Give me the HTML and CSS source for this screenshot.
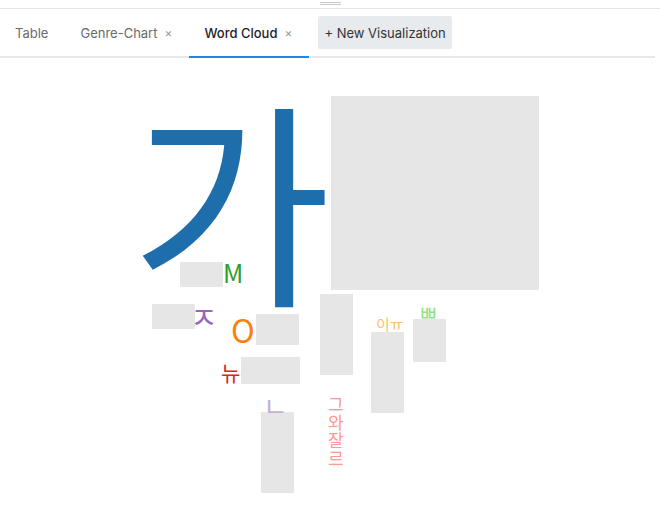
FILE: index.html
```html
<!DOCTYPE html>
<html lang="ko">
<head>
<meta charset="utf-8">
<title>Word Cloud</title>
<link rel="stylesheet" href="styles.css">
</head>
<body>
<div class="app">
  <div class="grip-row"><span class="grip"></span></div>
  <div class="tabbar">
    <div class="tab">Table</div>
    <div class="tab">Genre-Chart<span class="close">×</span></div>
    <div class="tab active">Word Cloud<span class="close">×</span></div>
    <button class="new-vis">+ New Visualization</button>
  </div>
  <svg class="cloud" width="660" height="463" viewBox="0 0 660 463">
    <g transform="translate(0,-58)">
      <rect class="blank" x="331" y="96" width="208" height="194"/>
      <rect class="blank" x="180" y="262" width="43" height="25"/>
      <rect class="blank" x="152" y="304" width="43" height="25"/>
      <rect class="blank" x="256" y="314" width="43" height="31"/>
      <rect class="blank" x="241" y="357" width="59" height="27"/>
      <rect class="blank" x="261" y="412" width="33" height="81"/>
      <rect class="blank" x="320" y="294" width="33" height="81"/>
      <rect class="blank" x="371" y="332" width="33" height="81"/>
      <rect class="blank" x="413" y="319" width="33" height="43"/>

      <text class="w w-blue" x="231" y="290" font-size="218" text-anchor="middle">가</text>
      <text class="w w-green" x="223" y="283" font-size="25">M</text>
      <text class="w w-orange" x="231" y="343" font-size="32">O</text>
      <text class="w w-purple" x="190" y="328" font-size="30">ㅈ</text>
      <text class="w w-red" x="221" y="381" font-size="21">뉴</text>
      <text class="w w-lavender" x="263" y="417" font-size="27">ㄴ</text>
      <text class="w w-peach" x="376" y="330" font-size="15">이ㅠ</text>
      <text class="w w-lightgreen" x="418" y="321" font-size="22">ㅃ</text>
      <text class="w w-pink" x="328" y="411" font-size="17">그</text>
      <text class="w w-pink" x="328" y="429" font-size="17">와</text>
      <text class="w w-pink" x="328" y="447" font-size="17">잘</text>
      <text class="w w-pink" x="328" y="465" font-size="17">르</text>
    </g>
  </svg>
</div>
</body>
</html>
```

FILE: styles.css
```css
html, body {
  margin: 0;
  padding: 0;
  background: #ffffff;
}

.app {
  width: 660px;
  height: 521px;
  overflow: hidden;
  font-family: Inter, "Noto Sans", "Noto Sans CJK KR", sans-serif;
}

.grip-row {
  height: 8px;
  border-bottom: 1px solid #e6e6e6;
  display: flex;
  justify-content: center;
}

.grip {
  display: block;
  width: 21px;
  height: 1px;
  margin-top: 2px;
  border-top: 1px solid #c8c8c8;
  border-bottom: 1px solid #c8c8c8;
}

.tabbar {
  display: flex;
  align-items: stretch;
  gap: 2px;
  height: 47px;
  margin-right: 5px;
  border-bottom: 2px solid #e8e8e8;
}

.tab {
  display: flex;
  align-items: center;
  padding: 0 15px;
  font-size: 13px;
  color: #6b6b6b;
  white-space: nowrap;
}

.tab.active {
  color: #1f1f1f;
  font-weight: 500;
  margin-bottom: -2px;
  border-bottom: 2px solid #1e88e5;
  padding-right: 17px;
}

.close {
  margin-left: 7px;
  font-size: 12px;
  color: #9a9a9a;
  font-weight: 400;
}

.new-vis {
  align-self: center;
  margin-left: 7px;
  height: 33px;
  padding: 0 6px;
  border: none;
  border-radius: 2px;
  background: #e8ebed;
  color: #333333;
  font-family: Inter, "Noto Sans", sans-serif;
  font-size: 13px;
  cursor: pointer;
}

.cloud {
  display: block;
}

.blank {
  fill: #e6e6e6;
}

.w {
  font-family: "Noto Sans CJK KR", "Noto Sans", sans-serif;
}

.w-blue { fill: #1f6eac; }
.w-green { fill: #2ca02c; }
.w-orange { fill: #ff7f0e; }
.w-purple { fill: #9467bd; }
.w-red { fill: #d62728; }
.w-lavender { fill: #c5b0d5; }
.w-peach { fill: #ffbb78; }
.w-lightgreen { fill: #98df8a; }
.w-pink { fill: #ff9896; }
```
